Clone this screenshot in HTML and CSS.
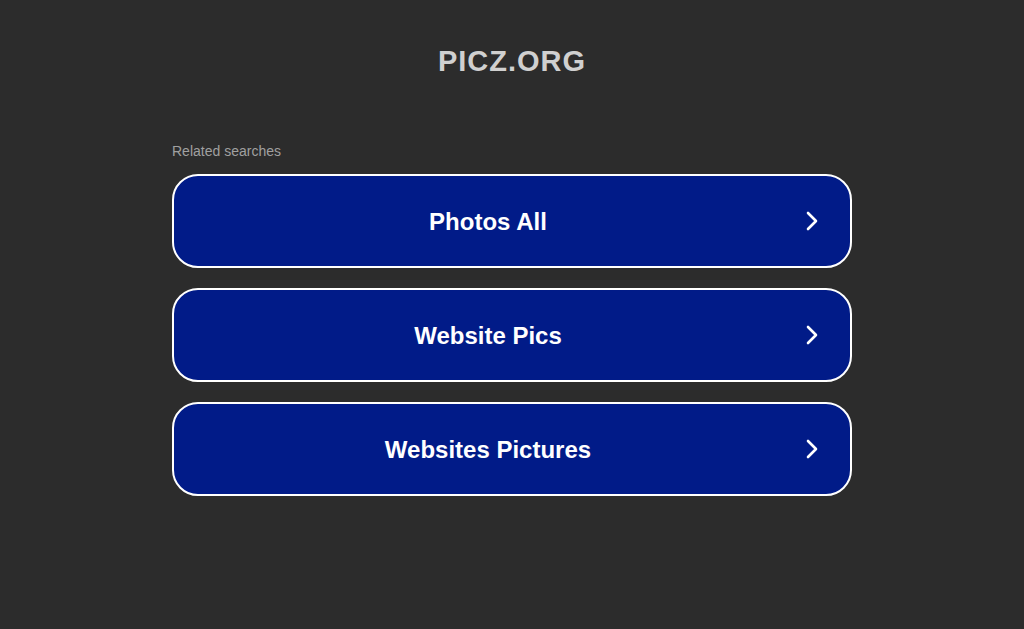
FILE: index.html
```html
<!DOCTYPE html>
<html>
<head>
<meta charset="utf-8">
<link rel="stylesheet" href="styles.css">
</head>
<body>
<div class="page">
  <h1 class="domain">PICZ.ORG</h1>
  <div class="content">
    <div class="label">Related searches</div>
    <div class="links">
      <a class="link" href="#"><span class="link-text">Photos All</span><span class="chev"><svg width="14" height="20" viewBox="0 0 14 20"><path d="M3 2 L11 10 L3 18" fill="none" stroke="#fff" stroke-width="2.6" stroke-linecap="round" stroke-linejoin="round"/></svg></span></a>
      <a class="link" href="#"><span class="link-text">Website Pics</span><span class="chev"><svg width="14" height="20" viewBox="0 0 14 20"><path d="M3 2 L11 10 L3 18" fill="none" stroke="#fff" stroke-width="2.6" stroke-linecap="round" stroke-linejoin="round"/></svg></span></a>
      <a class="link" href="#"><span class="link-text">Websites Pictures</span><span class="chev"><svg width="14" height="20" viewBox="0 0 14 20"><path d="M3 2 L11 10 L3 18" fill="none" stroke="#fff" stroke-width="2.6" stroke-linecap="round" stroke-linejoin="round"/></svg></span></a>
    </div>
  </div>
</div>
</body>
</html>
```

FILE: styles.css
```css
html, body {
  margin: 0;
  padding: 0;
  background: #2c2c2c;
  height: 100%;
}
body {
  font-family: "Liberation Sans", Arial, sans-serif;
}
.page {
  padding-top: 44px;
}
.domain {
  margin: 0;
  text-align: center;
  font-size: 29px;
  line-height: 34px;
  font-weight: bold;
  letter-spacing: 1px;
  color: #d0d0d0;
}
.content {
  width: 680px;
  margin: 63px auto 0;
}
.label {
  font-size: 14px;
  line-height: 20px;
  color: #a0a0a0;
  margin-bottom: 13px;
}
.links {
  display: flex;
  flex-direction: column;
  gap: 20px;
}
.link {
  display: flex;
  align-items: center;
  height: 90px;
  border: 2px solid #ffffff;
  border-radius: 26px;
  background: #011b88;
  text-decoration: none;
  color: #ffffff;
  padding-right: 28px;
}
.link-text {
  flex: 1;
  text-align: center;
  font-size: 24px;
  font-weight: bold;
  padding-top: 2px;
}
.chev {
  width: 20px;
  display: flex;
  justify-content: center;
  align-items: center;
}
.chev svg {
  display: block;
}
```
